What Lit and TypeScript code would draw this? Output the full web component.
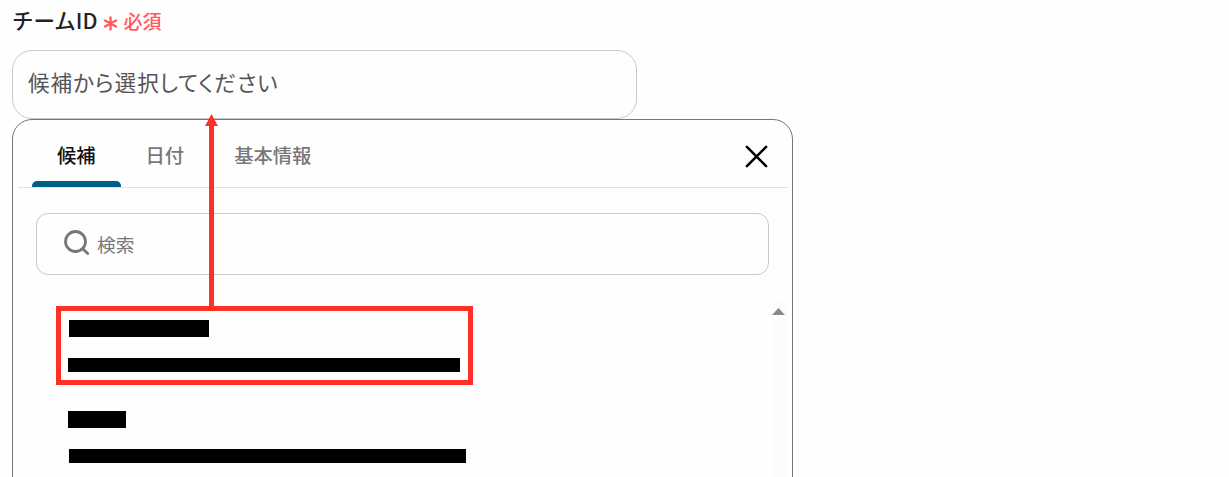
import { LitElement, html, css } from 'lit';
import { customElement, property, state } from 'lit/decorators.js';
import { classMap } from 'lit/directives/class-map.js';

@customElement('team-option')
export class TeamOption extends LitElement {
  @property({ type: Number }) name = 0;
  @property({ type: Number }) detail = 0;
  @property({ type: Number }) shift = 0;

  static styles = css`
    :host {
      display: flex;
      flex-direction: column;
      gap: 21px;
    }

    .bar {
      background: #000;
    }

    .name {
      height: 17px;
    }

    .detail {
      height: 14px;
    }
  `;

  render() {
    const nameShift = this.shift ? 0 : 1;
    return html`
      <div class="bar name" style="width:${this.name}px;margin-left:${nameShift}px"></div>
      <div class="bar detail" style="width:${this.detail}px;margin-left:${this.shift}px"></div>
    `;
  }
}

@customElement('app-root')
export class AppRoot extends LitElement {
  @state() private active = 0;

  private tabs = ['候補', '日付', '基本情報'];

  static styles = css`
    :host {
      display: block;
      position: relative;
      box-sizing: border-box;
      height: 477px;
      padding-left: 12px;
      overflow: hidden;
      background: #fefefe;
      font-family: 'Noto Sans CJK JP', 'Noto Sans', sans-serif;
    }

    * {
      box-sizing: border-box;
    }

    .label {
      display: flex;
      align-items: center;
      height: 50px;
      padding-bottom: 10px;
      color: #232325;
      font-size: 21.5px;
      font-weight: 500;
      line-height: 30px;
    }

    .star {
      width: 15px;
      height: 15px;
      margin: 6px 6px 0 5px;
    }

    .required {
      padding-top: 2px;
      color: #ff5a5f;
      font-size: 19px;
    }

    .field {
      display: flex;
      align-items: center;
      width: 625px;
      height: 69px;
      padding: 0 15px 6px;
      border: 1px solid #c9c8cb;
      border-radius: 20px;
      color: #555457;
      font-size: 21.6px;
      letter-spacing: 0.95px;
      font-feature-settings: 'palt';
    }

    .panel {
      width: 781px;
      height: 400px;
      padding: 0 4px 0 5px;
      border: 1px solid #77767a;
      border-radius: 20px 20px 0 0;
    }

    .head {
      display: flex;
      justify-content: space-between;
      height: 68px;
      padding: 0 20px 0 14px;
      border-bottom: 1px solid #e2e3e6;
    }

    .tabs {
      display: flex;
    }

    .tab {
      display: flex;
      flex-direction: column;
      justify-content: space-between;
      height: 67px;
      padding: 21px 25px 0;
      color: #777679;
      font-size: 19.3px;
      font-weight: 500;
      line-height: 28px;
      white-space: nowrap;
    }

    .tab.active {
      color: #111113;
    }

    .tab::after {
      content: '';
      height: 6px;
      margin: 0 -25px;
      border-radius: 5px 5px 0 0;
    }

    .tab.active::after {
      background: #005f87;
    }

    .close {
      width: 24px;
      height: 24px;
      margin-top: 24px;
    }

    .search {
      display: flex;
      align-items: center;
      width: 733px;
      height: 62px;
      margin: 25px 0 0 18px;
      padding-left: 26px;
      border: 1px solid #c9c8cb;
      border-radius: 12px;
      color: #777679;
      font-size: 18.7px;
    }

    .search span {
      padding-bottom: 2px;
    }

    .glass {
      width: 28px;
      height: 28px;
      margin: 0 6px 2px 0;
    }

    .body {
      display: flex;
      justify-content: space-between;
      padding-top: 26px;
    }

    .options {
      display: flex;
      flex-direction: column;
      gap: 39px;
      padding: 19px 0 0 50px;
    }

    .scroll {
      width: 16px;
      height: 180px;
      padding: 7px 0 0;
      background: #fcfbfd;
    }

    .scroll svg {
      display: block;
    }

    /* callout drawn over the form */
    .frame {
      position: absolute;
      left: 56px;
      top: 306px;
      width: 417px;
      height: 79px;
      border: 5px solid #ff3126;
    }

    .arrow {
      position: absolute;
      left: 205px;
      top: 114px;
    }
  `;

  render() {
    return html`
      <div class="label">
        <span>チームID</span>
        <svg class="star" viewBox="0 0 15 15" stroke="#ff5a5f" stroke-width="2.4" stroke-linecap="round">
          <path d="M7.5 1.5v12M2 4.5l11 6M13 4.5l-11 6" />
        </svg>
        <span class="required">必須</span>
      </div>
      <div class="field">候補から選択してください</div>
      <div class="panel">
        <div class="head">
          <div class="tabs">
            ${this.tabs.map((tab, i) => html`
              <div class=${classMap({ tab: true, active: i === this.active })} @click=${() => (this.active = i)}>${tab}</div>
            `)}
          </div>
          <svg class="close" viewBox="0 0 24 24" stroke="#000" stroke-width="2.6" stroke-linecap="round">
            <path d="M2.9 2.9l19.2 19.2M22.1 2.9l-19.2 19.2" />
          </svg>
        </div>
        <div class="search">
          <svg class="glass" viewBox="0 0 28 28" fill="none" stroke="#777679" stroke-width="2.8" stroke-linecap="round">
            <circle cx="12.5" cy="12.5" r="10" />
            <path d="M19.7 19.7l5 4.9" />
          </svg>
          <span>検索</span>
        </div>
        <div class="body">
          <div class="options">
            <team-option name="140" detail="392"></team-option>
            <team-option name="58" detail="397" shift="1"></team-option>
          </div>
          <div class="scroll">
            <svg width="13" height="7" viewBox="0 0 13 7"><path d="M0 7L6.5 0L13 7z" fill="#8b8a8d" /></svg>
          </div>
        </div>
      </div>
      <div class="frame"></div>
      <svg class="arrow" width="13" height="192" viewBox="0 0 13 192" fill="#ff3126">
        <path d="M6.5 0L13 12H9V192H4V12H0z" />
      </svg>
    `;
  }
}
